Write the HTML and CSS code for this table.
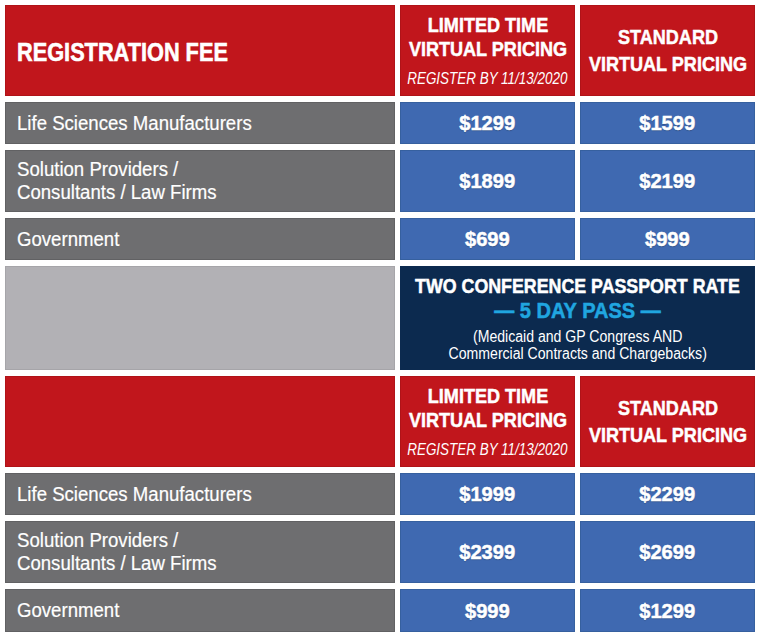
FILE: index.html
```html
<!DOCTYPE html>
<html>
<head>
<meta charset="utf-8">
<link rel="stylesheet" href="styles.css">
</head>
<body>
<div class="table">
  <div class="cell red title"><span class="t">REGISTRATION FEE</span></div>
  <div class="cell red colhead">
    <span class="ch">LIMITED TIME<br>VIRTUAL PRICING</span>
    <span class="reg">REGISTER BY 11/13/2020</span>
  </div>
  <div class="cell red colhead std"><span class="ch">STANDARD<br>VIRTUAL PRICING</span></div>

  <div class="cell gray label"><span class="t">Life Sciences Manufacturers</span></div>
  <div class="cell blue price"><span class="t">$1299</span></div>
  <div class="cell blue price"><span class="t">$1599</span></div>

  <div class="cell gray label"><span class="t">Solution Providers /<br>Consultants / Law Firms</span></div>
  <div class="cell blue price"><span class="t">$1899</span></div>
  <div class="cell blue price"><span class="t">$2199</span></div>

  <div class="cell gray label"><span class="t">Government</span></div>
  <div class="cell blue price"><span class="t">$699</span></div>
  <div class="cell blue price"><span class="t">$999</span></div>

  <div class="cell light"></div>
  <div class="cell navy passport">
    <span class="pt">TWO CONFERENCE PASSPORT RATE</span>
    <span class="pd">— 5 DAY PASS —</span>
    <span class="pn">(Medicaid and GP Congress AND<br>Commercial Contracts and Chargebacks)</span>
  </div>

  <div class="cell red"></div>
  <div class="cell red colhead">
    <span class="ch">LIMITED TIME<br>VIRTUAL PRICING</span>
    <span class="reg">REGISTER BY 11/13/2020</span>
  </div>
  <div class="cell red colhead std"><span class="ch">STANDARD<br>VIRTUAL PRICING</span></div>

  <div class="cell gray label"><span class="t">Life Sciences Manufacturers</span></div>
  <div class="cell blue price"><span class="t">$1999</span></div>
  <div class="cell blue price"><span class="t">$2299</span></div>

  <div class="cell gray label"><span class="t">Solution Providers /<br>Consultants / Law Firms</span></div>
  <div class="cell blue price"><span class="t">$2399</span></div>
  <div class="cell blue price"><span class="t">$2699</span></div>

  <div class="cell gray label"><span class="t">Government</span></div>
  <div class="cell blue price"><span class="t">$999</span></div>
  <div class="cell blue price"><span class="t">$1299</span></div>
</div>
</body>
</html>
```

FILE: styles.css
```css
html, body {
  margin: 0;
  padding: 0;
  background: #ffffff;
}

body {
  width: 760px;
  height: 637px;
  overflow: hidden;
  font-family: "Liberation Sans", Arial, sans-serif;
  color: #ffffff;
}

.table {
  display: grid;
  grid-template-columns: 390px 175px 175px;
  grid-template-rows: 91px 42px 62px 42px 104px 91px 42px 62px 43px;
  column-gap: 5px;
  row-gap: 6px;
  padding: 5px;
}

.cell {
  box-sizing: border-box;
  display: flex;
  flex-direction: column;
  justify-content: center;
}

.red {
  background: #c1161c;
  border: 1px solid #b01318;
}

.gray {
  background: #6e6e70;
  border: 1px solid #616163;
}

.blue {
  background: #3f69b1;
  border: 1px solid #36609f;
}

.light {
  background: #b2b1b5;
  border: 1px solid #a6a5a9;
}

.navy {
  background: #0c2a4f;
  grid-column: span 2;
}

.t, .ch, .reg, .pt, .pd, .pn {
  display: inline-block;
  white-space: nowrap;
}

/* condensed look: the installed faces have no narrow cut */
.title {
  align-items: flex-start;
  padding-left: 11px;
  padding-top: 3px;
  font-size: 26.5px;
  font-weight: bold;
}

.title .t {
  transform: scaleX(0.82);
  transform-origin: left center;
  -webkit-text-stroke: 0.6px #ffffff;
}

.colhead {
  align-items: center;
  text-align: center;
  font-weight: bold;
}

.colhead .ch {
  font-size: 21px;
  line-height: 24px;
  transform: scaleX(0.86);
  -webkit-text-stroke: 0.5px #ffffff;
}

.colhead.std .ch {
  line-height: 27px;
  margin-top: -1px;
}

.colhead .reg {
  font-size: 16px;
  line-height: 18px;
  font-weight: normal;
  font-style: italic;
  margin-top: 9px;
  transform: scaleX(0.84);
}

.label {
  align-items: flex-start;
  padding-left: 11px;
  font-size: 20px;
  line-height: 23px;
}

.label .t {
  transform: scaleX(0.93);
  transform-origin: left center;
  -webkit-text-stroke: 0.2px #ffffff;
}

.price {
  align-items: center;
  font-size: 21px;
  font-weight: bold;
}

.price .t {
  transform: scaleX(0.96);
  -webkit-text-stroke: 0.5px #ffffff;
  text-shadow: 0 1px 1px rgba(0, 0, 0, 0.25);
}

.passport {
  align-items: center;
  text-align: center;
}

.passport .pt {
  font-size: 20px;
  font-weight: bold;
  line-height: 24px;
  transform: scaleX(0.89);
  -webkit-text-stroke: 0.5px #ffffff;
}

.passport .pd {
  font-size: 22px;
  font-weight: bold;
  color: #20a6e0;
  line-height: 26px;
  transform: scaleX(0.91);
  -webkit-text-stroke: 0.5px #20a6e0;
}

.passport .pn {
  font-size: 16px;
  line-height: 17px;
  margin-top: 4px;
  transform: scaleX(0.88);
}
```
